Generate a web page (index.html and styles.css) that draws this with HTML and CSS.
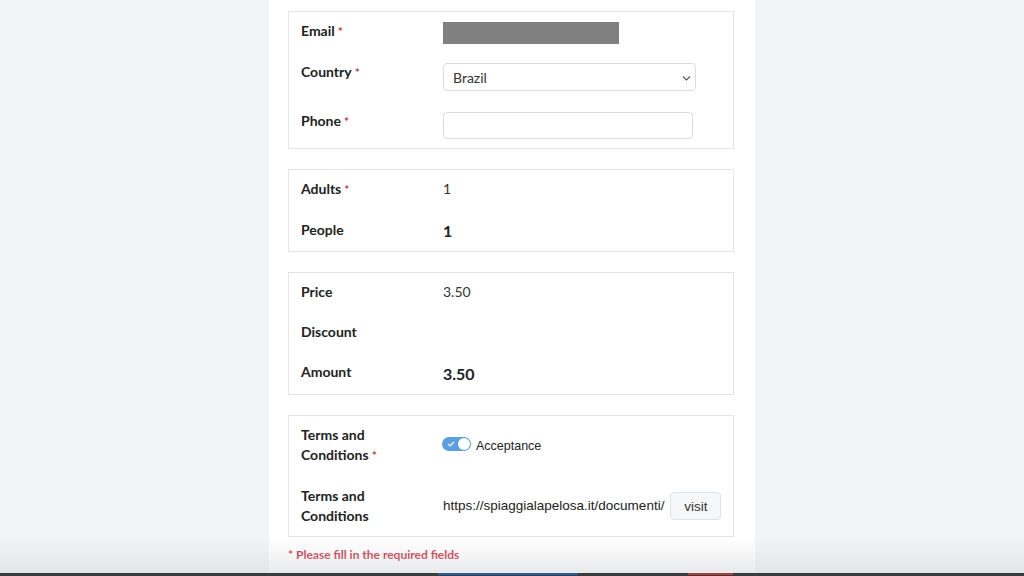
FILE: index.html
```html
<!DOCTYPE html>
<html lang="en">
<head>
    <meta charset="UTF-8">
    <meta name="viewport" content="width=device-width, initial-scale=1.0">
    <title>Booking Summary</title>
    <link rel="stylesheet" href="styles.css">
</head>
<body>
    <main class="page">
        <section class="card">
            <div class="row">
                <label class="label">Email<span class="req">*</span></label>
                <div class="value"><span class="masked"></span></div>
            </div>
            <div class="row">
                <label class="label">Country<span class="req">*</span></label>
                <div class="value">
                    <div class="select-wrap">
                        <select class="field select">
                            <option>Brazil</option>
                        </select>
                        <svg class="chevron" width="9" height="6" viewBox="0 0 9 6">
                            <path d="M1 1.5l3.5 3.5 3.5-3.5" fill="none" stroke="#555" stroke-width="1.1"/>
                        </svg>
                    </div>
                </div>
            </div>
            <div class="row">
                <label class="label">Phone<span class="req">*</span></label>
                <div class="value"><input class="field phone" type="text"></div>
            </div>
        </section>

        <section class="card">
            <div class="row">
                <div class="label">Adults<span class="req">*</span></div>
                <div class="value">1</div>
            </div>
            <div class="row">
                <div class="label">People</div>
                <div class="value strong">1</div>
            </div>
        </section>

        <section class="card">
            <div class="row">
                <div class="label">Price</div>
                <div class="value">3.50</div>
            </div>
            <div class="row">
                <div class="label">Discount</div>
                <div class="value"></div>
            </div>
            <div class="row">
                <div class="label">Amount</div>
                <div class="value strong total">3.50</div>
            </div>
        </section>

        <section class="card last">
            <div class="row mid">
                <div class="label">Terms and<br>Conditions<span class="req">*</span></div>
                <div class="value check">
                    <span class="switch">
                        <svg class="tick" width="8" height="6" viewBox="0 0 8 6">
                            <path d="M1 3l2 2 4-4" fill="none" stroke="#fff" stroke-width="1.2"/>
                        </svg>
                        <span class="knob"></span>
                    </span>
                    <span class="sys small">Acceptance</span>
                </div>
            </div>
            <div class="row mid">
                <div class="label">Terms and<br>Conditions</div>
                <div class="value link">
                    <span class="sys">https://spiaggialapelosa.it/documenti/</span>
                    <button class="visit">visit</button>
                </div>
            </div>
        </section>

        <p class="notice">* Please fill in the required fields</p>
    </main>

    <div class="fade"></div>
    <div class="dock">
        <span class="dock-blue"></span>
        <span class="dock-red"></span>
    </div>
</body>
</html>
```

FILE: styles.css
```css
/* General */
body {
    margin: 0;
    background-color: #f3f4f6;
    font-family: Lato, "Noto Sans", sans-serif;
    color: #222;
}

.page {
    width: 446px;
    min-height: 100vh;
    margin: 0 auto;
    padding: 11px 21px 0 19px;
    background-color: #fff;
}

/* Cards */
.card {
    border: 1px solid #e4e4e4;
    padding: 9px 13px 9px 12px;
    margin-bottom: 20px;
}

.card.last {
    padding-bottom: 10px;
    margin-bottom: 10px;
}

.row {
    display: grid;
    grid-template-columns: 142px 1fr;
    align-items: start;
    margin-bottom: 20px;
}

.row:last-child {
    margin-bottom: 0;
}

.row.mid {
    align-items: center;
}

.label {
    font-size: 14px;
    font-weight: 700;
    line-height: 20px;
    color: #222;
}

.req {
    color: #c8343f;
    font-size: 12px;
    margin-left: 3px;
}

.value {
    font-size: 14px;
    line-height: 20px;
    color: #333;
}

.value.strong {
    font-size: 16px;
    font-weight: 700;
    line-height: 22px;
    color: #222;
}

.value.total {
    line-height: 23px;
}

.masked {
    display: block;
    width: 176px;
    height: 22px;
    margin-top: 1px;
    margin-bottom: -3px;
    background-color: #808080;
}

/* Form fields */
.field {
    box-sizing: border-box;
    border: 1px solid #dcdcdc;
    border-radius: 4px;
    background: #fff;
    font-family: Lato, "Noto Sans", sans-serif;
    font-size: 14px;
    color: #333;
}

.select-wrap {
    position: relative;
    width: 253px;
}

.select {
    appearance: none;
    -webkit-appearance: none;
    width: 253px;
    height: 28px;
    margin-top: 1px;
    padding: 0 9px;
}

.chevron {
    position: absolute;
    right: 5px;
    top: 13px;
}

.phone {
    width: 250px;
    height: 27px;
    margin-top: 1px;
}

/* Terms */
.sys {
    font-family: "Liberation Sans", Arial, sans-serif;
    font-size: 13.5px;
    color: #222;
}

.sys.small {
    font-size: 12.5px;
}

.check {
    display: flex;
    align-items: center;
    gap: 5px;
}

.switch {
    position: relative;
    display: inline-block;
    width: 29px;
    height: 14px;
    border-radius: 7px;
    background-color: #5b9ee2;
    margin-top: -4px;
    margin-left: -1px;
}

.tick {
    position: absolute;
    left: 5px;
    top: 4px;
}

.knob {
    position: absolute;
    right: 1px;
    top: 1px;
    width: 12px;
    height: 12px;
    border-radius: 50%;
    background-color: #fff;
}

.link {
    display: flex;
    align-items: center;
    gap: 6px;
}

.visit {
    width: 51px;
    height: 28px;
    border: 1px solid #e0e2e5;
    border-radius: 4px;
    background-color: #f6f7f8;
    font-family: "Liberation Sans", Arial, sans-serif;
    font-size: 13.5px;
    color: #333;
}

.notice {
    margin: 0;
    font-size: 12px;
    font-weight: 700;
    line-height: 16px;
    color: #cc1f36;
}

/* Bottom overlay */
.fade {
    position: fixed;
    left: 0;
    right: 0;
    bottom: 3px;
    height: 34px;
    background: linear-gradient(rgba(225, 227, 230, 0), rgba(215, 217, 220, 0.55));
}

.dock {
    position: fixed;
    left: 0;
    right: 0;
    bottom: 0;
    height: 3px;
    background-color: #3a3b3c;
}

.dock-blue {
    position: absolute;
    left: 438px;
    top: 0;
    width: 140px;
    height: 2px;
    background-color: #2d5d9a;
}

.dock-red {
    position: absolute;
    left: 688px;
    top: 0;
    width: 45px;
    height: 2px;
    background-color: #b23a3a;
}
```
